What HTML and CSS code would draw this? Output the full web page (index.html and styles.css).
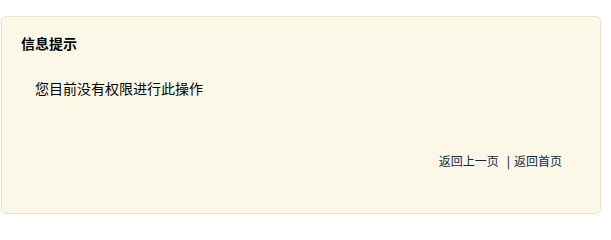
FILE: index.html
```html
<!DOCTYPE html>
<html lang="zh">
<head>
<meta charset="utf-8">
<title>信息提示</title>
<link rel="stylesheet" href="styles.css">
</head>
<body>
<div class="msgbox">
  <h3 class="msg-title">信息提示</h3>
  <p class="msg-text">您目前没有权限进行此操作</p>
  <div class="msg-links">
    <a href="#" class="msg-link">返回上一页</a>
    <span class="sep">|</span>
    <a href="#" class="msg-link">返回首页</a>
  </div>
</div>
</body>
</html>
```
FILE: styles.css
```css
html, body {
  margin: 0;
  padding: 0;
  background: #ffffff;
}
body {
  padding: 16px 11px 0 1px;
  font-family: "Noto Sans CJK SC", "Noto Sans", sans-serif;
  color: #000;
}
.msgbox {
  width: 598px;
  height: 196px;
  background: #fbf8e7;
  border: 1px solid #ece3c3;
  border-radius: 5px;
  box-sizing: content-box;
  display: flex;
  flex-direction: column;
}
.msg-title {
  margin: 0;
  padding: 16px 0 0 19px;
  font-size: 14px;
  font-weight: bold;
  line-height: 20px;
}
.msg-text {
  margin: 0;
  padding: 25px 0 0 33px;
  font-size: 14px;
  line-height: 20px;
}
.msg-links {
  display: flex;
  justify-content: flex-end;
  align-items: center;
  padding: 55px 38px 0 0;
  font-size: 12px;
  line-height: 16px;
}
.msg-link {
  color: #0b2a4f;
  text-decoration: none;
}
.sep {
  color: #000;
  margin: 0 4px 0 8px;
}
```
